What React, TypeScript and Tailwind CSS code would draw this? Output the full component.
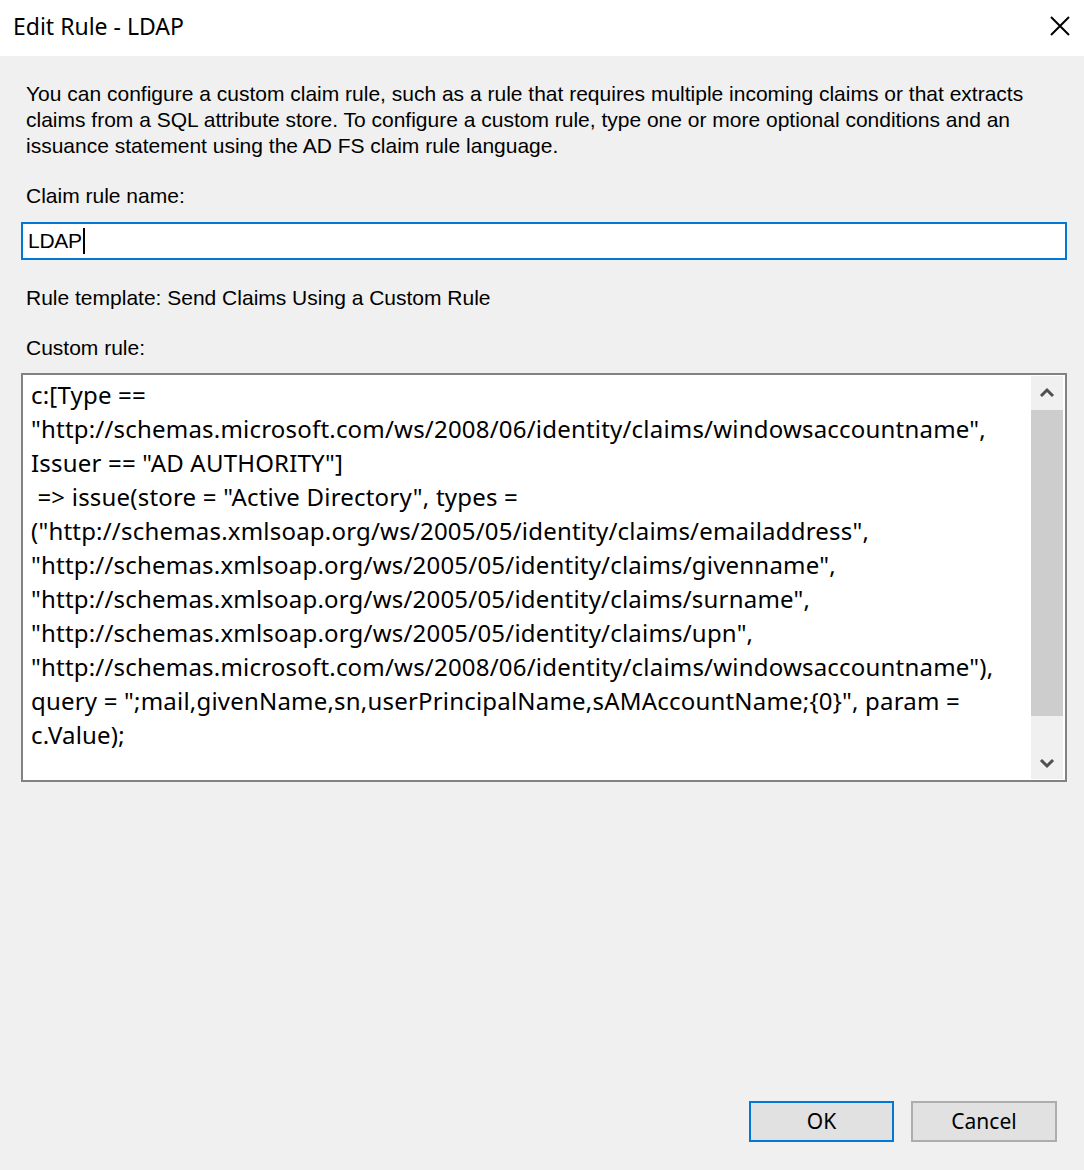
const ruleLines = [
  'c:[Type ==',
  '"http://schemas.microsoft.com/ws/2008/06/identity/claims/windowsaccountname",',
  'Issuer == "AD AUTHORITY"]',
  ' => issue(store = "Active Directory", types =',
  '("http://schemas.xmlsoap.org/ws/2005/05/identity/claims/emailaddress",',
  '"http://schemas.xmlsoap.org/ws/2005/05/identity/claims/givenname",',
  '"http://schemas.xmlsoap.org/ws/2005/05/identity/claims/surname",',
  '"http://schemas.xmlsoap.org/ws/2005/05/identity/claims/upn",',
  '"http://schemas.microsoft.com/ws/2008/06/identity/claims/windowsaccountname"),',
  'query = ";mail,givenName,sn,userPrincipalName,sAMAccountName;{0}", param =',
  'c.Value);',
];

const App = () => {
  return (
    <div className="flex h-[1170px] w-[1084px] flex-col bg-[#f0f0f0] font-['Liberation_Sans',sans-serif] text-[#000]">
      {/* ===== Title bar ===== */}
      <div className="flex h-[56px] items-center justify-between bg-white pl-[13px] pr-[4px]">
        <span className="pb-[3px] font-['Noto_Sans',sans-serif] text-[23px] text-[#000]">
          Edit Rule - LDAP
        </span>
        <svg width="40" height="40" viewBox="0 0 40 40" className="mb-[3px]">
          <path d="M11 10 L29 28 M29 10 L11 28" stroke="#000" strokeWidth="2" fill="none" />
        </svg>
      </div>

      {/* ===== Body ===== */}
      <div className="flex flex-1 flex-col">
        <p className="mt-[25px] pl-[26px] pr-[30px] text-[21px] leading-[26px]">
          You can configure a custom claim rule, such as a rule that requires multiple incoming claims or that extracts
          <br />
          claims from a SQL attribute store. To configure a custom rule, type one or more optional conditions and an
          <br />
          issuance statement using the AD FS claim rule language.
        </p>

        <p className="mt-[24px] pl-[26px] text-[21px] leading-[26px]">Claim rule name:</p>

        <div className="ml-[21px] mt-[13px] flex h-[38px] w-[1046px] items-center border-2 border-[#0078d7] bg-white pl-[5px]">
          <span className="text-[21px] tracking-[-0.3px]">LDAP</span>
          <span className="ml-[1px] h-[26px] w-[2px] bg-black" />
        </div>

        <p className="mt-[25px] pl-[26px] text-[21px] leading-[26px]">
          Rule template: Send Claims Using a Custom Rule
        </p>

        <p className="mt-[24px] pl-[26px] text-[21px] leading-[26px]">Custom rule:</p>

        {/* ===== Custom rule box ===== */}
        <div className="ml-[21px] mt-[12px] flex h-[409px] w-[1046px] border-2 border-[#828282] bg-white">
          <div className="flex-1 whitespace-pre pl-[8px] pt-[3px] font-['Noto_Sans',sans-serif] text-[24px] leading-[34px] tracking-[0.2px] text-[#000]">
            {ruleLines.map((line) => (
              <div key={line}>{line}</div>
            ))}
          </div>
          <div className="my-[1px] mr-[2px] flex w-[32px] flex-col bg-[#f0f0f0]">
            <div className="flex h-[34px] items-center justify-center">
              <svg width="16" height="12" viewBox="0 0 16 12">
                <path d="M2 9 L8 3 L14 9" stroke="#505050" strokeWidth="3" fill="none" />
              </svg>
            </div>
            <div className="h-[306px] bg-[#cdcdcd]" />
            <div className="flex flex-1 items-end justify-center pb-[10px]">
              <svg width="16" height="12" viewBox="0 0 16 12">
                <path d="M2 3 L8 9 L14 3" stroke="#505050" strokeWidth="3" fill="none" />
              </svg>
            </div>
          </div>
        </div>

        {/* ===== Buttons ===== */}
        <div className="mt-auto mb-[28px] flex justify-end gap-[17px] pr-[27px]">
          <button
            type="button"
            className="h-[41px] w-[145px] border-2 border-[#0078d7] bg-[#e1e1e1] font-['Noto_Sans',sans-serif] text-[21px] text-black"
          >
            OK
          </button>
          <button
            type="button"
            className="h-[41px] w-[146px] border-2 border-[#adadad] bg-[#e1e1e1] font-['Noto_Sans',sans-serif] text-[21px] text-black"
          >
            Cancel
          </button>
        </div>
      </div>
    </div>
  );
};

export default App;
